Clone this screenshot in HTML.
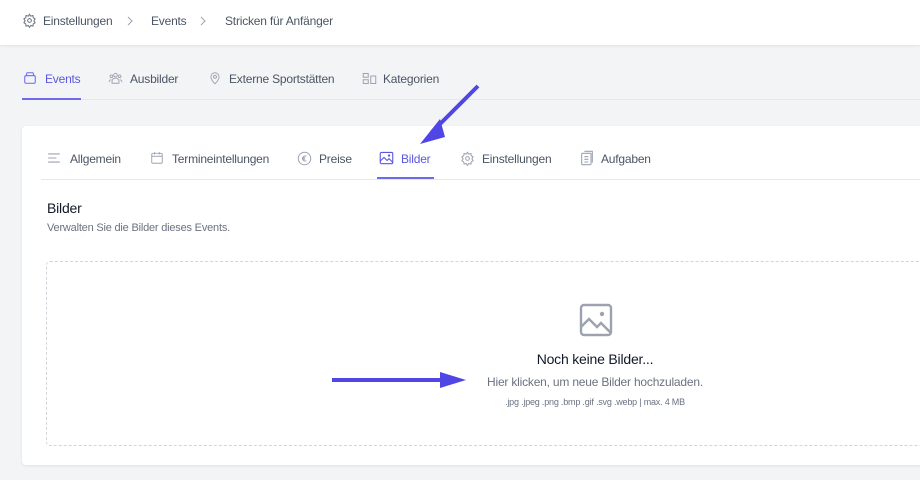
<!DOCTYPE html>
<html><head><meta charset="utf-8"><style>
*{margin:0;padding:0;box-sizing:border-box}
body{width:920px;height:480px;overflow:hidden;background:#f3f4f6;font-family:"Liberation Sans",sans-serif;position:relative;color:#4b5563}
.top{position:absolute;left:0;top:0;width:920px;height:45px;background:#fff;box-shadow:0 1px 3px rgba(0,0,0,.08)}
.t{position:absolute;font-size:12px;white-space:nowrap;letter-spacing:-0.2px}
svg{position:absolute}
.card{position:absolute;left:22px;top:126px;width:910px;height:339px;background:#fff;border-radius:4px;box-shadow:0 1px 3px rgba(0,0,0,.08)}
</style></head><body>
<div class="top"></div>
<svg style="left:22px;top:13px" width="15" height="15" viewBox="0 0 24 24" fill="none" stroke="#6b7280" stroke-width="1.6"><circle cx="12" cy="12" r="3"/><path d="M12 2l2 3 3.5-1 .5 3.5 3 2-2 3 2 3-3 2-.5 3.5-3.5-1-2 3-2-3-3.5 1-.5-3.5-3-2 2-3-2-3 3-2 .5-3.5 3.5 1z"/></svg>
<div class="t" style="left:43px;top:14px;color:#4b5563">Einstellungen</div>
<svg style="left:127px;top:16px" width="6" height="10" viewBox="0 0 6 10" fill="none" stroke="#9ca3af" stroke-width="1"><path d="M1 1l4 4-4 4"/></svg>
<div class="t" style="left:151px;top:14px">Events</div>
<svg style="left:200px;top:16px" width="6" height="10" viewBox="0 0 6 10" fill="none" stroke="#9ca3af" stroke-width="1"><path d="M1 1l4 4-4 4"/></svg>
<div class="t" style="left:225px;top:14px">Stricken für Anfänger</div>

<div style="position:absolute;left:22px;top:99px;width:898px;height:1px;background:#e5e7eb"></div>
<div style="position:absolute;left:22px;top:98px;width:59px;height:2px;background:#6d6af0"></div>
<svg style="left:23px;top:71px" width="14" height="14" viewBox="0 0 24 24" fill="none" stroke="#6d6af0" stroke-width="1.8"><rect x="3" y="8" width="18" height="13" rx="2"/><path d="M5 8l2-5h10l2 5"/></svg>
<div class="t" style="left:45px;top:72px;color:#5b57e0">Events</div>
<svg style="left:108px;top:71px" width="15" height="14" viewBox="0 0 24 24" fill="none" stroke="#9ca3af" stroke-width="1.6"><circle cx="12" cy="7" r="3"/><circle cx="5" cy="9" r="2.3"/><circle cx="19" cy="9" r="2.3"/><path d="M6 21v-3a6 6 0 0112 0v3zM1 19a4 4 0 014-4M23 19a4 4 0 00-4-4"/></svg>
<div class="t" style="left:130px;top:72px">Ausbilder</div>
<svg style="left:208px;top:70px" width="14" height="16" viewBox="0 0 24 24" fill="none" stroke="#9ca3af" stroke-width="1.6"><path d="M12 22s-7-7-7-12a7 7 0 0114 0c0 5-7 12-7 12z"/><circle cx="12" cy="10" r="2.5"/></svg>
<div class="t" style="left:229px;top:72px">Externe Sportstätten</div>
<svg style="left:362px;top:72px" width="15" height="13" viewBox="0 0 24 20" fill="none" stroke="#9ca3af" stroke-width="1.6"><rect x="2" y="2" width="8" height="6"/><rect x="2" y="12" width="8" height="6"/><rect x="14" y="6" width="8" height="12"/></svg>
<div class="t" style="left:383px;top:72px">Kategorien</div>

<div class="card"></div>
<div style="position:absolute;left:41px;top:179px;width:879px;height:1px;background:#e5e7eb"></div>
<div style="position:absolute;left:377px;top:177px;width:57px;height:2px;background:#6d6af0"></div>
<svg style="left:47px;top:152px" width="14" height="12" viewBox="0 0 24 20" fill="none" stroke="#9ca3af" stroke-width="1.8"><path d="M2 3h20M2 10h14M2 17h20"/></svg>
<div class="t" style="left:70px;top:152px">Allgemein</div>
<svg style="left:150px;top:151px" width="14" height="14" viewBox="0 0 24 24" fill="none" stroke="#9ca3af" stroke-width="1.6"><rect x="3" y="4" width="18" height="17" rx="2"/><path d="M3 9h18M8 2v4M16 2v4"/></svg>
<div class="t" style="left:172px;top:152px">Termineintellungen</div>
<svg style="left:297px;top:151px" width="15" height="15" viewBox="0 0 24 24" fill="none" stroke="#9ca3af" stroke-width="1.6"><circle cx="12" cy="12" r="10"/><path d="M15 8.5a4 4 0 100 7M8 11h5M8 13h5"/></svg>
<div class="t" style="left:319px;top:152px">Preise</div>
<svg style="left:379px;top:151px" width="15" height="14" viewBox="0 0 24 22" fill="none" stroke="#5b57e0" stroke-width="1.8"><rect x="2" y="2" width="20" height="18" rx="2"/><path d="M2 16l6-6 5 5 3-3 6 6"/><circle cx="16" cy="7" r="1"/></svg>
<div class="t" style="left:401px;top:152px;color:#5b57e0">Bilder</div>
<svg style="left:460px;top:151px" width="15" height="15" viewBox="0 0 24 24" fill="none" stroke="#9ca3af" stroke-width="1.6"><circle cx="12" cy="12" r="3"/><path d="M12 2l2 3 3.5-1 .5 3.5 3 2-2 3 2 3-3 2-.5 3.5-3.5-1-2 3-2-3-3.5 1-.5-3.5-3-2 2-3-2-3 3-2 .5-3.5 3.5 1z"/></svg>
<div class="t" style="left:482px;top:152px">Einstellungen</div>
<svg style="left:580px;top:150px" width="14" height="16" viewBox="0 0 20 24" fill="none" stroke="#9ca3af" stroke-width="1.6"><rect x="2" y="5" width="14" height="17" rx="1"/><path d="M6 2h12v17M6 10h6M6 14h6M6 18h6"/></svg>
<div class="t" style="left:601px;top:152px">Aufgaben</div>

<div class="t" style="left:47px;top:200px;font-size:14px;color:#111827">Bilder</div>
<div class="t" style="left:47px;top:222px;font-size:11px;color:#6b7280">Verwalten Sie die Bilder dieses Events.</div>

<div style="position:absolute;left:46px;top:261px;width:890px;height:185px;border:1px dashed #d1d5db;border-radius:4px"></div>
<svg style="left:579px;top:303px" width="34" height="34" viewBox="0 0 34 34" fill="none" stroke="#9ca3af" stroke-width="2.4"><rect x="2" y="2" width="30" height="30" rx="3"/><path d="M2 24l8-8 8 8 4-4 10 10"/><circle cx="23" cy="11" r="1" fill="#9ca3af"/></svg>
<div class="t" style="left:0;width:1190px;text-align:center;top:351px;font-size:14px;color:#111827">Noch keine Bilder...</div>
<div class="t" style="left:0;width:1190px;text-align:center;top:375px;font-size:12px;color:#6b7280">Hier klicken, um neue Bilder hochzuladen.</div>
<div class="t" style="left:0;width:1190px;text-align:center;top:397px;font-size:9px;color:#6b7280">.jpg .jpeg .png .bmp .gif .svg .webp | max. 4 MB</div>

<svg style="left:0;top:0" width="920" height="480"><g fill="#4f46e5" stroke="#4f46e5"><path d="M478 86L432 132" stroke-width="4"/><polygon points="420,144 440,119 445,137" stroke="none"/><path d="M332 380H445" stroke-width="4"/><polygon points="466,380 440,372 440,388" stroke="none"/></g></svg>
</body></html>
